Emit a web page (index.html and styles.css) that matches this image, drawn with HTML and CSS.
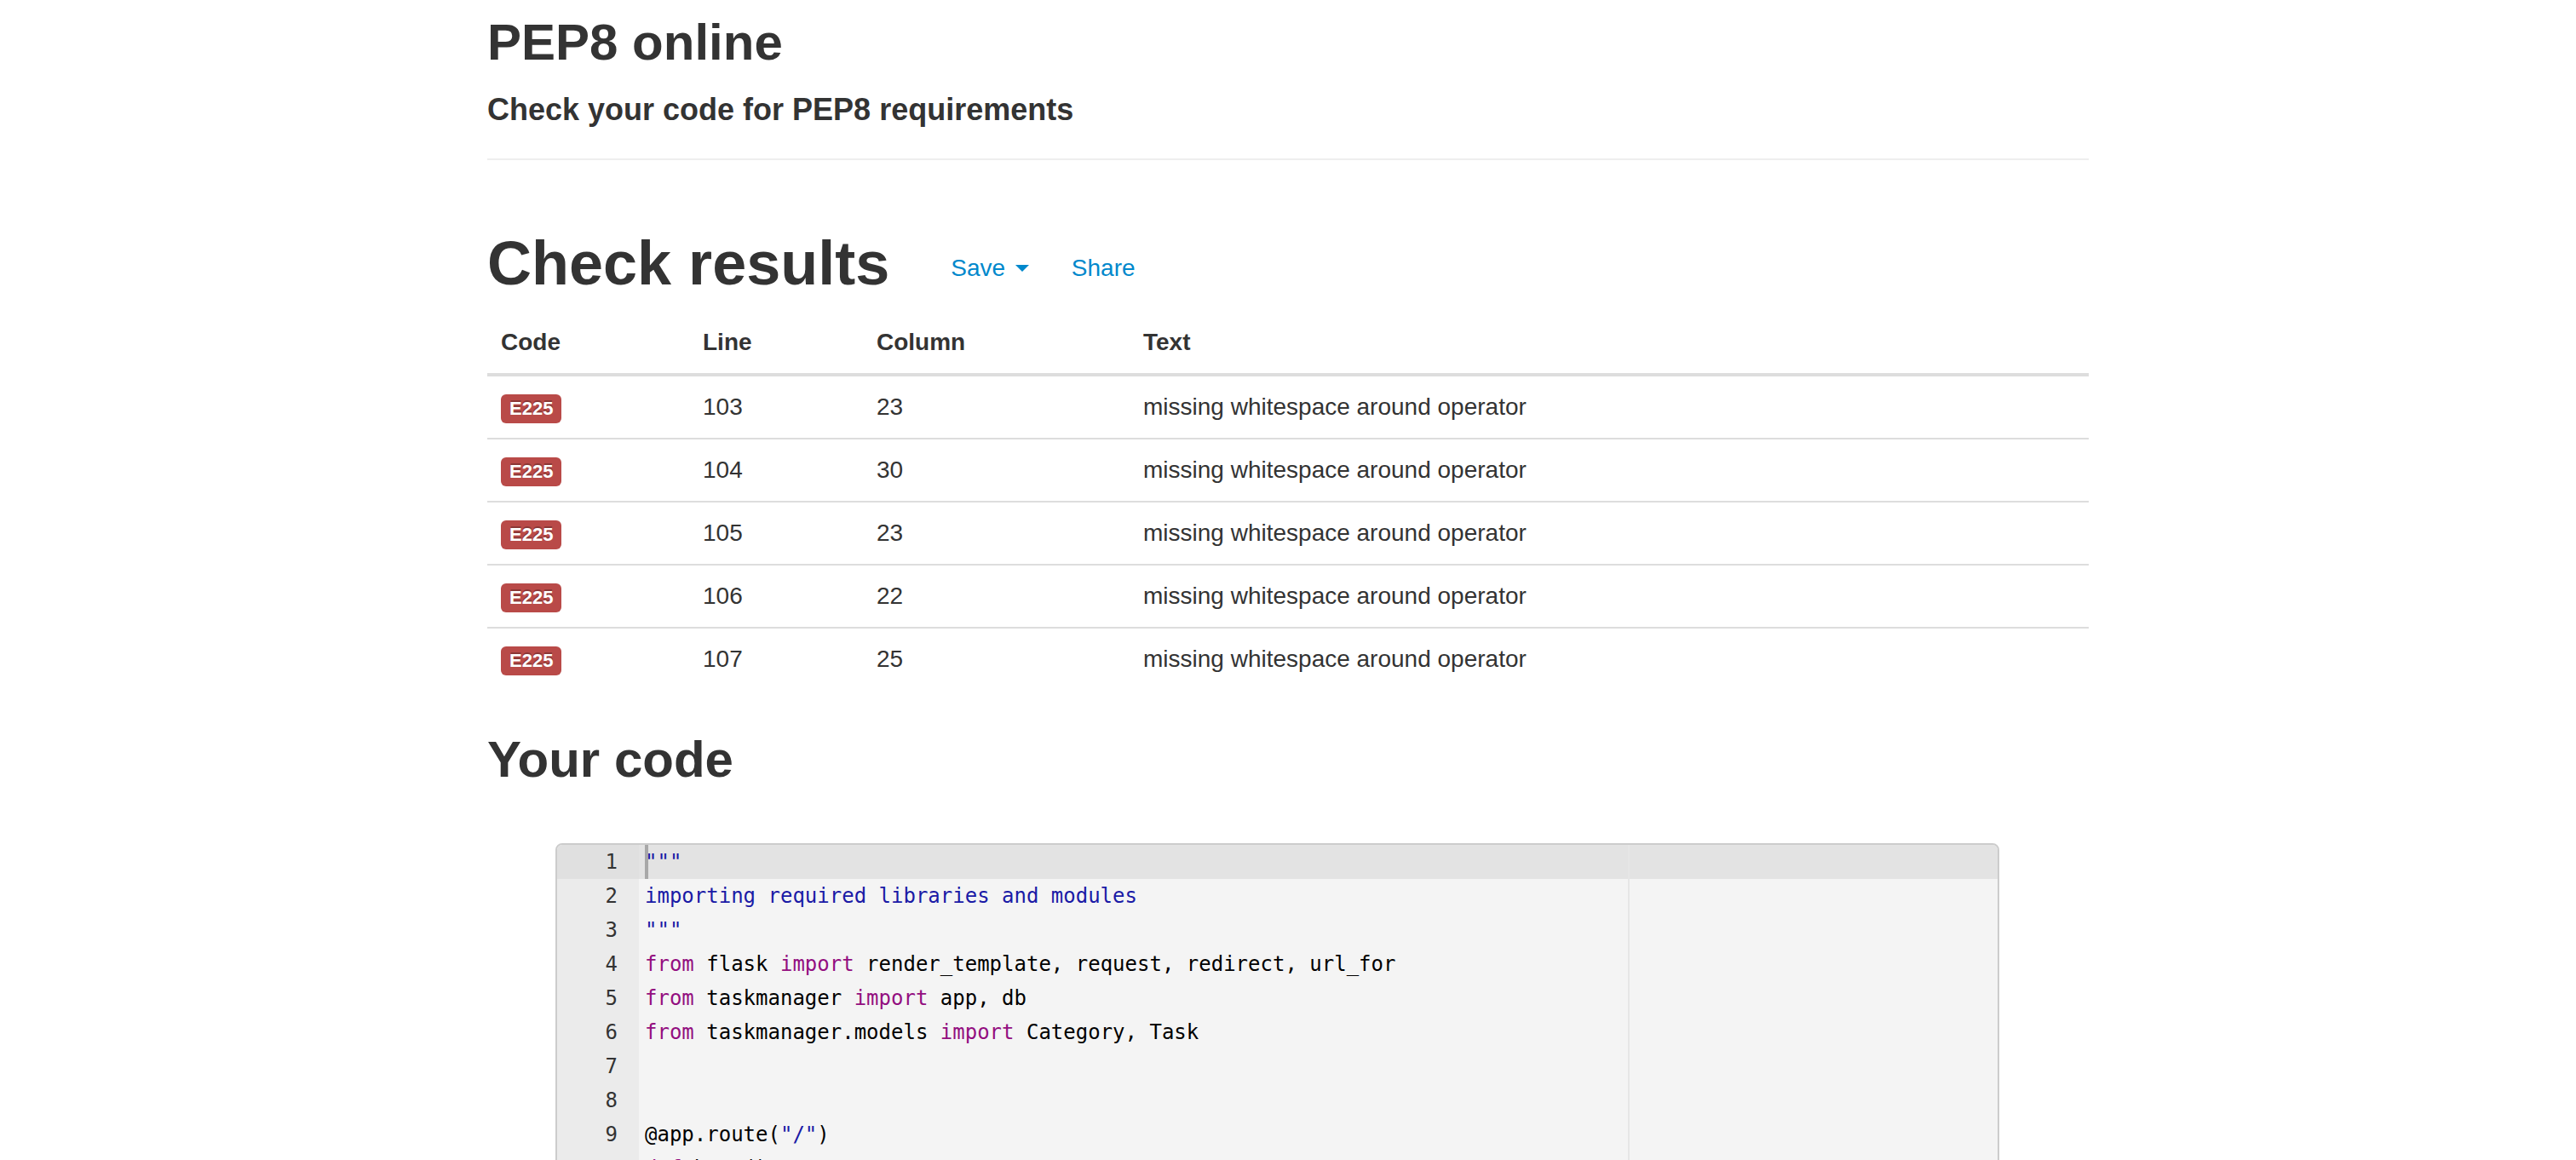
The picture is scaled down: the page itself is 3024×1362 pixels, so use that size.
FILE: index.html
```html
<!DOCTYPE html>
<html lang="en">
<head>
<meta charset="utf-8">
<title>PEP8 online</title>
<link rel="stylesheet" href="styles.css">
</head>
<body>
<div class="container">
  <header class="page-header">
    <h1 class="site-title">PEP8 online</h1>
    <p class="site-subtitle">Check your code for PEP8 requirements</p>
  </header>

  <section class="results">
    <div class="results-head">
      <h1 class="results-title">Check results</h1>
      <ul class="nav">
        <li><a href="#">Save <span class="caret"></span></a></li>
        <li><a href="#">Share</a></li>
      </ul>
    </div>
    <table class="table">
      <colgroup>
        <col class="col-code">
        <col class="col-line">
        <col class="col-column">
        <col class="col-text">
      </colgroup>
      <thead>
        <tr><th>Code</th><th>Line</th><th>Column</th><th>Text</th></tr>
      </thead>
      <tbody>
        <tr><td><span class="label">E225</span></td><td>103</td><td>23</td><td>missing whitespace around operator</td></tr>
        <tr><td><span class="label">E225</span></td><td>104</td><td>30</td><td>missing whitespace around operator</td></tr>
        <tr><td><span class="label">E225</span></td><td>105</td><td>23</td><td>missing whitespace around operator</td></tr>
        <tr><td><span class="label">E225</span></td><td>106</td><td>22</td><td>missing whitespace around operator</td></tr>
        <tr><td><span class="label">E225</span></td><td>107</td><td>25</td><td>missing whitespace around operator</td></tr>
      </tbody>
    </table>
  </section>

  <section class="your-code">
    <h2 class="code-title">Your code</h2>
    <div class="editor">
      <div class="gutter">
        <div class="gutter-cell is-active">1</div>
        <div class="gutter-cell">2</div>
        <div class="gutter-cell">3</div>
        <div class="gutter-cell">4</div>
        <div class="gutter-cell">5</div>
        <div class="gutter-cell">6</div>
        <div class="gutter-cell">7</div>
        <div class="gutter-cell">8</div>
        <div class="gutter-cell">9</div>
        <div class="gutter-cell">10</div>
      </div>
      <div class="code-lines">
        <div class="code-line is-active"><span class="tok-str">"""</span></div>
        <div class="code-line"><span class="tok-str">importing required libraries and modules</span></div>
        <div class="code-line"><span class="tok-str">"""</span></div>
        <div class="code-line"><span class="tok-kw">from</span> flask <span class="tok-kw">import</span> render_template, request, redirect, url_for</div>
        <div class="code-line"><span class="tok-kw">from</span> taskmanager <span class="tok-kw">import</span> app, db</div>
        <div class="code-line"><span class="tok-kw">from</span> taskmanager.models <span class="tok-kw">import</span> Category, Task</div>
        <div class="code-line"></div>
        <div class="code-line"></div>
        <div class="code-line">@app.route(<span class="tok-str">"/"</span>)</div>
        <div class="code-line"><span class="tok-kw">def</span> home():</div>
        <span class="print-margin"></span>
        <span class="cursor"></span>
      </div>
    </div>
  </section>
</div>
</body>
</html>
```

FILE: styles.css
```css
* {
  box-sizing: border-box;
}

html,
body {
  margin: 0;
  padding: 0;
  background: #ffffff;
}

body {
  font-family: "Liberation Sans", Arial, Helvetica, sans-serif;
  font-size: 28px;
  line-height: 40px;
  color: #333333;
}

.container {
  width: 1880px;
  margin: 0 auto;
}

/* header */
.page-header {
  padding-top: 17px;
  padding-bottom: 37px;
  border-bottom: 2px solid #eeeeee;
}

.site-title {
  margin: 0;
  font-size: 60px;
  line-height: 66px;
  font-weight: 700;
}

.site-subtitle {
  margin: 26px 0 0;
  font-size: 36px;
  line-height: 40px;
  font-weight: 700;
}

/* results */
.results-head {
  display: flex;
  align-items: flex-start;
  margin-top: 82px;
}

.results-title {
  margin: 0;
  font-size: 72px;
  line-height: 79px;
  font-weight: 700;
}

.nav {
  display: flex;
  gap: 50px;
  list-style: none;
  margin: 25px 0 0 72px;
  padding: 0;
}

.nav a {
  color: #0088cc;
  text-decoration: none;
  font-size: 28px;
  line-height: 40px;
}

.caret {
  display: inline-block;
  width: 0;
  height: 0;
  margin-left: 4px;
  vertical-align: middle;
  border-top: 8px solid #0088cc;
  border-left: 8px solid transparent;
  border-right: 8px solid transparent;
  position: relative;
  top: -2px;
}

.table {
  width: 100%;
  margin-top: 17px;
  border-collapse: collapse;
  border-spacing: 0;
  table-layout: fixed;
}

.col-code { width: 237px; }
.col-line { width: 204px; }
.col-column { width: 313px; }

.table th {
  padding: 16px;
  text-align: left;
  font-weight: 700;
  line-height: 40px;
  vertical-align: bottom;
  border-bottom: 4px solid #dddddd;
}

.table td {
  padding: 16px;
  line-height: 40px;
  vertical-align: top;
  border-top: 2px solid #dddddd;
}

.label {
  display: inline-block;
  padding: 4px 10px;
  font-size: 22px;
  line-height: 26px;
  font-weight: 700;
  color: #ffffff;
  background: #b94a48;
  border-radius: 6px;
  text-shadow: 0 -2px 0 rgba(0, 0, 0, 0.25);
  vertical-align: baseline;
  white-space: nowrap;
}

/* code */
.code-title {
  margin: 49px 0 0;
  font-size: 60px;
  line-height: 66px;
  font-weight: 700;
}

.editor {
  display: flex;
  width: 1695px;
  margin: 65px 0 40px 80px;
  border: 2px solid #cccccc;
  border-radius: 8px;
  background: #f4f4f4;
  overflow: hidden;
  font-family: "DejaVu Sans Mono", "Liberation Mono", monospace;
  font-size: 24px;
  line-height: 40px;
}

.gutter {
  flex: none;
  width: 96px;
  background: #ebebeb;
  color: #333333;
  text-align: right;
}

.gutter-cell {
  height: 40px;
  padding-right: 25px;
}

.gutter-cell.is-active {
  background: #e0e0e0;
}

.code-lines {
  position: relative;
  flex: 1;
}

.code-line {
  height: 40px;
  padding-left: 7px;
  white-space: pre;
  color: #000000;
}

.code-line.is-active {
  background: #e3e3e3;
}

.tok-kw {
  color: #930f80;
}

.tok-str {
  color: #1a1aa6;
}

.print-margin {
  position: absolute;
  top: 0;
  bottom: 0;
  left: 1161px;
  width: 2px;
  background: #e6e6e6;
}

.cursor {
  position: absolute;
  top: 0;
  left: 7px;
  width: 4px;
  height: 40px;
  background: #a8a8a8;
}
```
